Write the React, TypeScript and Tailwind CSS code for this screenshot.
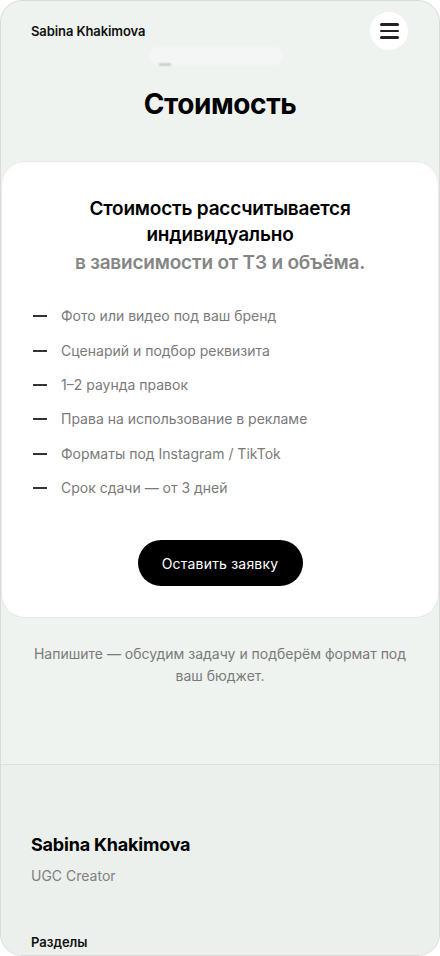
import React from "react";

const items = [
  "Фото или видео под ваш бренд",
  "Сценарий и подбор реквизита",
  "1–2 раунда правок",
  "Права на использование в рекламе",
  "Форматы под Instagram / TikTok",
  "Срок сдачи — от 3 дней",
];

export default function App() {
  return (
    <div className="w-[440px] h-[956px] bg-white" style={{ fontFamily: "Inter, 'Noto Sans', sans-serif" }}>
      <div className="w-[440px] h-[956px] overflow-hidden rounded-[22px] border border-[#d9dcd9] bg-[#eff3f0] flex flex-col">
        {/* Header */}
        <div className="flex items-center justify-between pl-[30px] pr-[31px] pt-[11px]">
          <span className="text-[13px] font-semibold text-[#111] tracking-[-0.1px] mt-[2px]">Sabina Khakimova</span>
          <button className="w-[38px] h-[38px] rounded-full bg-white flex flex-col items-center justify-center gap-[4px]">
            <span className="block w-[19px] h-[2.5px] bg-[#222] rounded" />
            <span className="block w-[19px] h-[2.5px] bg-[#222] rounded" />
            <span className="block w-[19px] h-[2.5px] bg-[#222] rounded" />
          </button>
        </div>

        {/* faint blurred element */}
        <div className="flex justify-center -mt-[4px] pr-[8px]">
          <div className="relative w-[134px] h-[20px] rounded-full bg-white/25 blur-[1px]">
            <span className="absolute left-[10px] bottom-[1px] w-[12px] h-[1.5px] bg-[#555]/70" />
          </div>
        </div>

        <h1 className="text-center text-[28px] font-bold text-black tracking-[-0.4px] leading-[34px] mt-[21px]">Стоимость</h1>

        {/* Card */}
        <div className="mt-[40px] bg-white rounded-[24px] border border-[#e6e9e6] pt-[34px] pb-[31px]">
          <h2 className="text-center text-[19px] font-semibold text-black leading-[26px] tracking-[-0.2px]">
            Стоимость рассчитывается
            <br />
            индивидуально
          </h2>
          <p className="text-center text-[19px] font-semibold text-[#858585] leading-[26px] mt-[2px] tracking-[-0.2px]">
            в зависимости от ТЗ и объёма.
          </p>
          <ul className="mt-[23px] pl-[31px] flex flex-col">
            {items.map((t) => (
              <li key={t} className="flex items-center h-[34.4px]">
                <span className="block w-[14px] h-[2px] bg-[#333] mr-[14px]" />
                <span className="text-[14px] text-[#7a7a7a] leading-[20px]">{t}</span>
              </li>
            ))}
          </ul>
          <div className="flex justify-center mt-[35px]">
            <button className="w-[165px] h-[46px] rounded-full bg-black text-white text-[14px] tracking-[0.2px]">
              Оставить заявку
            </button>
          </div>
        </div>

        <p className="text-center text-[14px] text-[#7a7a7a] leading-[22px] mt-[25px] px-[30px]">
          Напишите — обсудим задачу и подберём формат под ваш бюджет.
        </p>

        {/* Footer */}
        <div className="mt-[77px] flex-1 border-t border-[#dde1dd] bg-[#ebf0ec] pl-[30px] pt-[68px]">
          <div className="text-[18px] font-bold text-black leading-[24px] tracking-[-0.2px]">Sabina Khakimova</div>
          <div className="text-[14px] text-[#808080] mt-[9px] leading-[20px]">UGC Creator</div>
          <div className="text-[13px] font-semibold text-[#111] mt-[47px] leading-[18px]">Разделы</div>
        </div>
      </div>
    </div>
  );
}
